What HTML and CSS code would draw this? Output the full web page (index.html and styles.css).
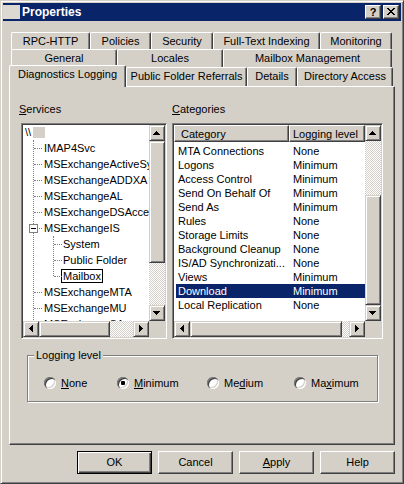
FILE: index.html
```html
<!DOCTYPE html>
<html>
<head>
<meta charset="utf-8">
<title>Properties</title>
<link rel="stylesheet" href="styles.css">
</head>
<body>
<div class="window">
  <div class="titlebar">
    <span class="app-icon"></span>
    <span class="title">Properties</span>
    <span class="tb-buttons">
      <span class="tb-btn help-glyph">?</span>
      <span class="tb-btn"><svg viewBox="1 1 14 12" width="14" height="12"><path d="M4 3h2v1h1v1h2V4h1V3h2v1h-1v1h-1v1h-1v1h1v1h1v1h1v1h-2V9h-1V8H7v1H6v1H4V9h1V8h1V7h1V6H6V5H5V4H4z" fill="#000"/></svg></span>
    </span>
  </div>

  <div class="tabs">
    <div class="tab-row row1">
      <div class="tab w-rpc">RPC-HTTP</div>
      <div class="tab w-pol">Policies</div>
      <div class="tab w-sec">Security</div>
      <div class="tab w-fti">Full-Text Indexing</div>
      <div class="tab w-mon">Monitoring</div>
    </div>
    <div class="tab-row row2">
      <div class="tab w-gen">General</div>
      <div class="tab w-loc">Locales</div>
      <div class="tab w-mbx">Mailbox Management</div>
    </div>
    <div class="tab-row row3">
      <div class="tab active w-diag">Diagnostics Logging</div>
      <div class="tab w-pfr">Public Folder Referrals</div>
      <div class="tab w-det">Details</div>
      <div class="tab w-dir">Directory Access</div>
    </div>
  </div>

  <div class="panel">
    <div class="columns">
      <div class="col col-left">
        <div class="label shift"><u>S</u>ervices</div>
        <div class="field tree">
          <div class="view tree-view">
            <div class="tree-list">
              <div class="trow root"><span>\\</span><span class="redact"></span></div>
              <div class="branch1">
                <div class="trow l1">IMAP4Svc</div>
                <div class="trow l1">MSExchangeActiveSyncSvc</div>
                <div class="trow l1">MSExchangeADDXA</div>
                <div class="trow l1">MSExchangeAL</div>
                <div class="trow l1">MSExchangeDSAccess</div>
                <div class="trow l1"><span class="expander"></span>MSExchangeIS</div>
                <div class="branch2">
                  <div class="trow l2">System</div>
                  <div class="trow l2">Public Folder</div>
                  <div class="trow l2"><span class="focus">Mailbox</span></div>
                </div>
                <div class="trow l1">MSExchangeMTA</div>
                <div class="trow l1">MSExchangeMU</div>
                <div class="trow l1">MSExchangeSA</div>
              </div>
            </div>
          </div>
          <div class="vscroll">
            <div class="sb"><svg viewBox="1 1 14 14" width="14" height="14"><path d="M7 6h1v1h1v1h1v1h1v1H4V9h1V8h1V7h1z"/></svg></div>
            <div class="sb thumb tv-thumb"></div>
            <div class="track"></div>
            <div class="sb"><svg viewBox="1 1 14 14" width="14" height="14"><path d="M4 6h7v1h-1v1h-1v1h-1v1H7V9H6V8H5V7H4z"/></svg></div>
          </div>
          <div class="hscroll">
            <div class="sb"><svg viewBox="1 1 14 14" width="14" height="14"><path d="M6 7h1V6h1V5h1V4h1v7H9v-1H8V9H7V8H6z"/></svg></div>
            <div class="sb thumb th-thumb"></div>
            <div class="track"></div>
            <div class="sb"><svg viewBox="1 1 14 14" width="14" height="14"><path d="M6 4h1v1h1v1h1v1h1v1H9v1H8v1H7v1H6z"/></svg></div>
          </div>
          <div class="corner"></div>
        </div>
      </div>

      <div class="col col-right">
        <div class="label"><u>C</u>ategories</div>
        <div class="field list">
          <div class="view lv">
            <div class="lv-head">
              <div class="hcell hc1">Category</div>
              <div class="hcell hc2">Logging level</div>
            </div>
            <div class="lv-rows">
              <div class="lrow"><span class="c1">MTA Connections</span><span class="c2">None</span></div>
              <div class="lrow"><span class="c1">Logons</span><span class="c2">Minimum</span></div>
              <div class="lrow"><span class="c1">Access Control</span><span class="c2">Minimum</span></div>
              <div class="lrow"><span class="c1">Send On Behalf Of</span><span class="c2">Minimum</span></div>
              <div class="lrow"><span class="c1">Send As</span><span class="c2">Minimum</span></div>
              <div class="lrow"><span class="c1">Rules</span><span class="c2">None</span></div>
              <div class="lrow"><span class="c1">Storage Limits</span><span class="c2">None</span></div>
              <div class="lrow"><span class="c1">Background Cleanup</span><span class="c2">None</span></div>
              <div class="lrow"><span class="c1">IS/AD Synchronizati...</span><span class="c2">None</span></div>
              <div class="lrow"><span class="c1">Views</span><span class="c2">Minimum</span></div>
              <div class="lrow selected"><span class="c1">Download</span><span class="c2">Minimum</span></div>
              <div class="lrow"><span class="c1">Local Replication</span><span class="c2">None</span></div>
            </div>
          </div>
          <div class="vscroll">
            <div class="sb"><svg viewBox="1 1 14 14" width="14" height="14"><path d="M7 6h1v1h1v1h1v1h1v1H4V9h1V8h1V7h1z"/></svg></div>
            <div class="track lv-track"></div>
            <div class="sb thumb lv-thumb"></div>
            <div class="sb"><svg viewBox="1 1 14 14" width="14" height="14"><path d="M4 6h7v1h-1v1h-1v1h-1v1H7V9H6V8H5V7H4z"/></svg></div>
          </div>
          <div class="hscroll">
            <div class="sb"><svg viewBox="1 1 14 14" width="14" height="14"><path d="M6 7h1V6h1V5h1V4h1v7H9v-1H8V9H7V8H6z"/></svg></div>
            <div class="sb thumb lh-thumb"></div>
            <div class="track"></div>
            <div class="sb"><svg viewBox="1 1 14 14" width="14" height="14"><path d="M6 4h1v1h1v1h1v1h1v1H9v1H8v1H7v1H6z"/></svg></div>
          </div>
          <div class="corner"></div>
        </div>
      </div>
    </div>

    <div class="group">
      <div class="legend">Logging level</div>
      <div class="radios">
        <div class="radio r-none"><span class="circle"></span><span><u>N</u>one</span></div>
        <div class="radio r-min"><span class="circle checked"></span><span><u>M</u>inimum</span></div>
        <div class="radio r-med"><span class="circle"></span><span>Me<u>d</u>ium</span></div>
        <div class="radio"><span class="circle"></span><span>Ma<u>x</u>imum</span></div>
      </div>
    </div>
  </div>

  <div class="buttons">
    <div class="btn default">OK</div>
    <div class="btn">Cancel</div>
    <div class="btn"><u>A</u>pply</div>
    <div class="btn">Help</div>
  </div>
</div>
</body>
</html>
```

FILE: styles.css
```css
* { box-sizing: border-box; }
html, body { margin: 0; padding: 0; }
body {
  font-family: "Liberation Sans", Arial, sans-serif;
  font-size: 11px;
  color: #000;
  background: #d4d0c8;
}
u { text-decoration: underline; text-underline-offset: 1px; }

.window {
  width: 404px;
  height: 484px;
  background: #d4d0c8;
  border: 1px solid;
  border-color: #d4d0c8 #404040 #404040 #d4d0c8;
  box-shadow: inset 1px 1px 0 #fff, inset -1px -1px 0 #808080;
  padding: 2px;
  display: flex;
  flex-direction: column;
}

/* Title bar */
.titlebar {
  height: 18px;
  flex: none;
  background: #0a246a;
  display: flex;
  align-items: center;
  color: #fff;
}
.app-icon {
  width: 17px;
  height: 14px;
  background: #dcd9d3;
}
.title {
  flex: 1;
  margin-left: 2px;
  font-weight: bold;
  font-size: 12px;
}
.tb-buttons { display: flex; gap: 2px; margin-right: 2px; }
.tb-btn {
  width: 16px;
  height: 14px;
  background: #d4d0c8;
  border: 1px solid;
  border-color: #fff #404040 #404040 #fff;
  box-shadow: inset -1px -1px 0 #808080;
  display: flex;
  align-items: center;
  justify-content: center;
  color: #000;
}
.tb-btn svg { display: block; }
.help-glyph { font-weight: bold; font-size: 11px; line-height: 12px; }

/* Tabs */
.tabs { margin-top: 11px; flex: none; }
.tab-row { display: flex; align-items: flex-start; }
.row1 { margin-left: 8px; height: 17px; }
.row2 { margin-left: 8px; height: 16px; }
.row3 { margin-left: 6px; height: 21px; position: relative; z-index: 1; }
.tab {
  flex: none;
  height: 17px;
  background: #d4d0c8;
  border-top: 1px solid #fff;
  border-left: 1px solid #fff;
  border-right: 1px solid #404040;
  box-shadow: inset -1px 0 0 #808080;
  border-radius: 2px 2px 0 0;
  text-align: center;
  line-height: 15px;
  padding-top: 1px;
  white-space: nowrap;
}
.row2 .tab { height: 18px; }
.row3 .tab { margin-top: 2px; height: 19px; }
.row3 .tab.active { margin-top: 0; height: 22px; }

.w-rpc { width: 79px; }
.w-pol { width: 61px; }
.w-sec { width: 62px; }
.w-fti { width: 107px; }
.w-mon { width: 72px; }
.w-gen { width: 106px; }
.w-loc { width: 106px; }
.w-mbx { width: 169px; }
.w-diag { width: 117px; }
.w-pfr { width: 121px; }
.w-det { width: 50px; }
.w-dir { width: 96px; }

/* Panel */
.panel {
  flex: none;
  margin-left: 6px;
  width: 386px;
  height: 359px;
  border: 1px solid;
  border-color: #fff #404040 #404040 #fff;
  box-shadow: inset -1px -1px 0 #808080;
  padding-top: 16px;
}
.columns { display: flex; gap: 5px; padding-left: 11px; }
.col-left { width: 146px; }
.col-right { width: 211px; }
.label { height: 13px; line-height: 13px; margin-bottom: 7px; white-space: nowrap; }
.label.shift { margin-left: -2px; }

.field {
  height: 216px;
  border: 1px solid;
  border-color: #808080 #fff #fff #808080;
  box-shadow: inset 1px 1px 0 #404040, inset -1px -1px 0 #d4d0c8;
  padding: 1px;
  display: grid;
  grid-template-columns: 1fr 16px;
  grid-template-rows: 1fr 16px;
  background: #d4d0c8;
}
.view { background: #fff; overflow: hidden; position: relative; min-width: 0; }

/* Scrollbars */
.vscroll, .hscroll {
  display: flex;
  background: repeating-conic-gradient(#fff 0 25%, #d4d0c8 0 50%) 0 0 / 2px 2px;
}
.vscroll { flex-direction: column; }
.track { flex: 1; }
.sb {
  flex: none;
  width: 16px;
  height: 16px;
  background: #d4d0c8;
  border: 1px solid;
  border-color: #d4d0c8 #404040 #404040 #d4d0c8;
  box-shadow: inset 1px 1px 0 #fff, inset -1px -1px 0 #808080;
}
.sb svg { display: block; fill: #000; }
.tv-thumb { height: 122px; }
.th-thumb { width: 71px; }
.lv-track { flex: none; height: 54px; }
.lv-thumb { height: 110px; }
.lh-thumb { width: 152px; }
.corner { background: #d4d0c8; }

/* Tree */
.tree-list { margin-top: -1px; }
.trow {
  height: 16px;
  line-height: 16px;
  white-space: nowrap;
  position: relative;
  display: flex;
  align-items: center;
}
.root { padding-left: 2px; }
.redact { width: 12px; height: 11px; background: #d4d0c8; margin-left: 2px; }
.branch1, .branch2 { position: relative; }
.branch1::before {
  content: "";
  position: absolute;
  left: 10px;
  top: 0;
  bottom: 0;
  border-left: 1px dotted #808080;
}
.branch2::before {
  content: "";
  position: absolute;
  left: 30px;
  top: 0;
  bottom: 8px;
  border-left: 1px dotted #808080;
}
.l1 { padding-left: 21px; }
.l2 { padding-left: 40px; }
.l1::before, .l2::before {
  content: "";
  position: absolute;
  top: 8px;
  width: 8px;
  border-top: 1px dotted #808080;
}
.l1::before { left: 11px; }
.l2::before { left: 31px; }
.expander {
  position: absolute;
  left: 6px;
  top: 4px;
  width: 9px;
  height: 9px;
  background: #fff;
  border: 1px solid #808080;
  z-index: 1;
}
.expander::after {
  content: "";
  position: absolute;
  left: 1px;
  top: 3px;
  width: 5px;
  height: 1px;
  background: #000;
}
.focus {
  border: 1px solid #000;
  line-height: 12px;
  padding: 0 1px;
  margin-left: -2px;
}

/* List view */
.lv-head { display: flex; height: 17px; }
.hcell {
  height: 17px;
  border: 1px solid;
  border-color: #fff #404040 #404040 #fff;
  box-shadow: inset -1px -1px 0 #808080;
  background: #d4d0c8;
  line-height: 15px;
  padding-top: 1px;
  white-space: nowrap;
  overflow: hidden;
}
.hc1 { width: 115px; padding-left: 6px; }
.hc2 { flex: 1; padding-left: 3px; }
.lv-rows { padding-top: 2px; }
.lrow {
  display: flex;
  height: 14px;
  line-height: 14px;
  margin-left: 2px;
  white-space: nowrap;
}
.lrow .c1 { width: 117px; padding-left: 2px; overflow: hidden; flex: none; }
.lrow .c2 { flex: 1; }
.lrow.selected { background: #0a246a; color: #fff; }

/* Group box */
.group {
  margin: 16px 0 0 17px;
  width: 351px;
  height: 47px;
  border: 1px solid #808080;
  box-shadow: inset 1px 1px 0 #fff, 1px 1px 0 #fff;
}
.legend {
  width: max-content;
  margin: -7px 0 0 6px;
  padding: 0 2px;
  line-height: 13px;
  background: #d4d0c8;
}
.radios {
  display: flex;
  align-items: center;
  height: 13px;
  margin: 14px 0 0 16px;
}
.radio { display: flex; align-items: center; gap: 5px; flex: none; white-space: nowrap; }
.r-none { width: 73px; }
.r-min { width: 90px; }
.r-med { width: 87px; }
.circle {
  width: 12px;
  height: 12px;
  border-radius: 50%;
  background: #fff;
  box-shadow: inset 1px 1px 0 #808080, inset 2px 2px 0 #404040, inset -1px -1px 0 #fff, inset -2px -2px 0 #d4d0c8;
  position: relative;
  flex: none;
}
.circle.checked::after {
  content: "";
  position: absolute;
  left: 4px;
  top: 4px;
  width: 4px;
  height: 4px;
  border-radius: 1px;
  background: #000;
}

/* Buttons */
.buttons {
  display: flex;
  justify-content: flex-end;
  gap: 6px;
  margin-top: 6px;
  padding-right: 6px;
}
.btn {
  width: 75px;
  height: 23px;
  border: 1px solid;
  border-color: #fff #404040 #404040 #fff;
  box-shadow: inset -1px -1px 0 #808080;
  text-align: center;
  line-height: 20px;
}
.btn.default {
  border-color: #000;
  box-shadow: inset 1px 1px 0 #fff, inset -1px -1px 0 #404040, inset -2px -2px 0 #808080;
}
```
